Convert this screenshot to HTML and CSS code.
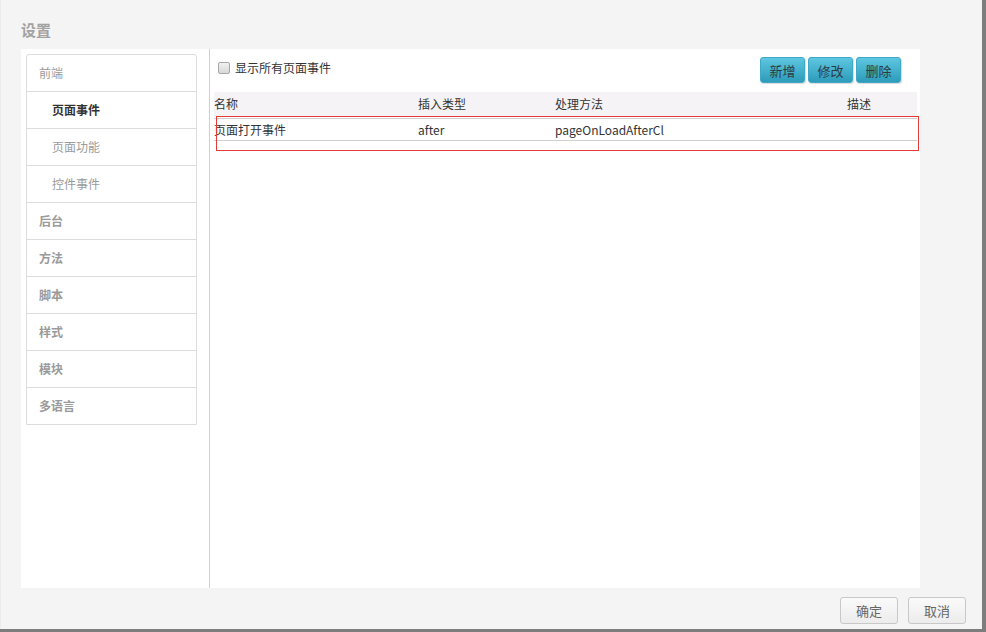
FILE: index.html
```html
<!DOCTYPE html>
<html lang="zh-CN">
<head>
<meta charset="utf-8">
<title>设置</title>
<link rel="stylesheet" href="styles.css">
</head>
<body>
<div class="dialog">
  <div class="title">设置</div>
  <div class="panel">
    <div class="nav-col">
      <ul class="nav">
        <li class="nav-item group">前端</li>
        <li class="nav-item sub active">页面事件</li>
        <li class="nav-item sub">页面功能</li>
        <li class="nav-item sub">控件事件</li>
        <li class="nav-item top">后台</li>
        <li class="nav-item top">方法</li>
        <li class="nav-item top">脚本</li>
        <li class="nav-item top">样式</li>
        <li class="nav-item top">模块</li>
        <li class="nav-item top">多语言</li>
      </ul>
    </div>
    <div class="content">
      <div class="toolbar">
        <label class="check"><span class="box"></span>显示所有页面事件</label>
        <div class="actions">
          <button class="btn-blue">新增</button>
          <button class="btn-blue">修改</button>
          <button class="btn-blue">删除</button>
        </div>
      </div>
      <div class="table">
        <div class="thead">
          <span class="c1">名称</span><span class="c2">插入类型</span><span class="c3">处理方法</span><span class="c4">描述</span>
        </div>
        <div class="row">
          <span class="c1">页面打开事件</span><span class="c2">after</span><span class="c3">pageOnLoadAfterCl</span><span class="c4"></span>
        </div>
        <div class="highlight"></div>
      </div>
    </div>
  </div>
  <div class="footer">
    <button class="btn">确定</button>
    <button class="btn">取消</button>
  </div>
</div>
</body>
</html>
```
FILE: styles.css
```css
* { box-sizing: border-box; }
html, body { margin: 0; padding: 0; }
body {
  width: 986px;
  height: 632px;
  background: #7d7d7d;
  font-family: "Noto Sans CJK SC", "Noto Sans", sans-serif;
  font-size: 12px;
  color: #333;
  overflow: hidden;
}
.dialog {
  width: 982px;
  height: 629px;
  background: #f4f4f4;
  border-left: 1px solid #ececec;
  display: flex;
  flex-direction: column;
}
.title {
  height: 49px;
  padding: 20px 0 0 20px;
  font-size: 15px;
  line-height: 20px;
  font-weight: bold;
  color: #a2a2a2;
}
.panel {
  margin-left: 20px;
  width: 899px;
  height: 539px;
  background: #fff;
  display: flex;
}
.nav-col {
  width: 189px;
  border-right: 1px solid #d0d0d0;
  padding: 5px 0 0 5px;
}
.nav {
  list-style: none;
  margin: 0;
  padding: 0;
  width: 171px;
  border: 1px solid #dcdcdc;
  border-radius: 3px 3px 0 0;
}
.nav-item {
  height: 37px;
  line-height: 36px;
  border-top: 1px solid #dcdcdc;
  padding-left: 12px;
  color: #9a9a9a;
  font-size: 12px;
}
.nav-item:first-child { border-top: none; height: 36px; }
.nav-item.top { font-weight: bold; }
.nav-item.sub { padding-left: 25px; }
.nav-item.active { color: #333; font-weight: bold; }
.content {
  flex: 1;
  padding: 8px 3px 0 4px;
  position: relative;
}
.toolbar {
  height: 35px;
  display: flex;
  justify-content: space-between;
  align-items: flex-start;
  padding-right: 16px;
}
.check {
  display: flex;
  align-items: center;
  gap: 5px;
  padding: 4px 0 0 4px;
  line-height: 14px;
  color: #333;
}
.box {
  width: 12px;
  height: 12px;
  border: 1px solid #a8a8a8;
  border-radius: 2px;
  background: linear-gradient(#f0f0f0, #d8d8d8);
}
.actions { display: flex; gap: 3px; }
.btn-blue {
  width: 45px;
  height: 26px;
  border: 1px solid #3ea8c6;
  border-radius: 3px;
  background: linear-gradient(#5ec6e0, #2c9cba);
  color: #2b3b44;
  font-family: inherit;
  font-size: 13px;
  padding: 0;
  box-shadow: 1px 1px 1px rgba(0,0,0,0.15);
}
.table { position: relative; }
.thead, .row { display: flex; }
.thead {
  height: 24px;
  line-height: 24px;
  background: #f6f3f6;
  margin-bottom: 2px;
}
.row {
  height: 23px;
  line-height: 21px;
  border-top: 1px solid #cfcfcf;
  border-bottom: 1px solid #cfcfcf;
}
.c1 { width: 204px; }
.c2 { width: 137px; }
.c3 { width: 292px; }
.c4 { flex: 1; }
.highlight {
  position: absolute;
  left: 2px;
  top: 24px;
  width: 703px;
  height: 35px;
  border: 1px solid #e53a3a;
}
.footer {
  flex: 1;
  display: flex;
  justify-content: flex-end;
  align-items: flex-start;
  gap: 10px;
  padding: 9px 16px 0 0;
}
.btn {
  width: 58px;
  height: 27px;
  border: 1px solid #c8c8c8;
  border-radius: 3px;
  background: linear-gradient(#fafafa, #ececec);
  color: #666;
  font-family: inherit;
  font-size: 13px;
  padding: 0;
}
```
